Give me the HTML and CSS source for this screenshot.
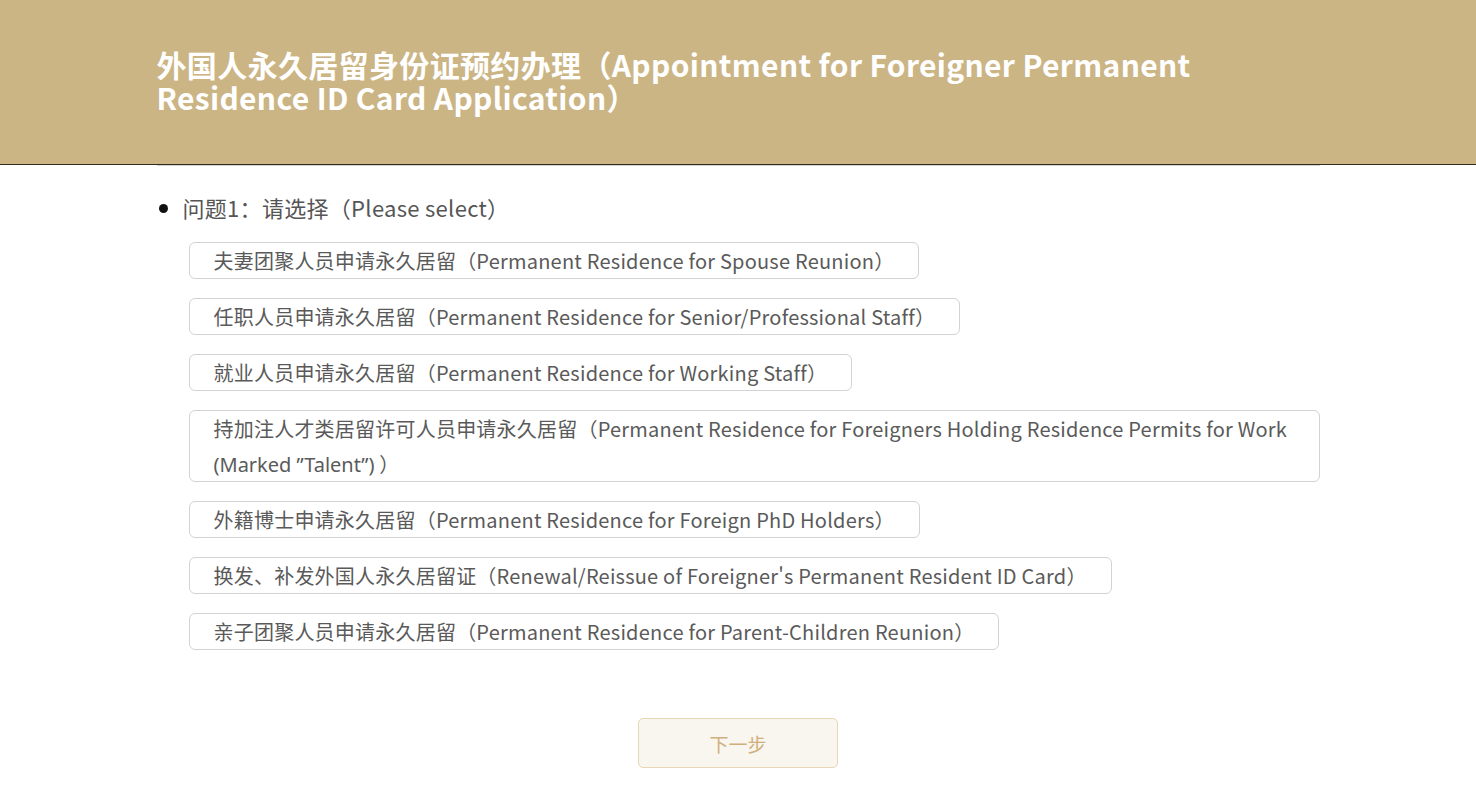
FILE: index.html
```html
<!DOCTYPE html>
<html lang="zh-CN">
<head>
<meta charset="utf-8">
<title>外国人永久居留身份证预约办理</title>
<link rel="stylesheet" href="styles.css">
</head>
<body>
<header class="top">
  <div class="top-inner">
    <h1 class="title">外国人永久居留身份证预约办理（Appointment for Foreigner Permanent Residence ID Card Application）</h1>
  </div>
</header>
<main class="main">
  <ul class="questions">
    <li class="question">
      <div class="q-label">问题1：请选择（Please select）</div>
      <div class="options">
        <div class="option">夫妻团聚人员申请永久居留（Permanent Residence for Spouse Reunion）</div>
        <div class="option">任职人员申请永久居留（Permanent Residence for Senior/Professional Staff）</div>
        <div class="option">就业人员申请永久居留（Permanent Residence for Working Staff）</div>
        <div class="option">持加注人才类居留许可人员申请永久居留（Permanent Residence for Foreigners Holding Residence Permits for Work <span class="latin">(Marked ”Talent”)</span> ）</div>
        <div class="option">外籍博士申请永久居留（Permanent Residence for Foreign PhD Holders）</div>
        <div class="option">换发、补发外国人永久居留证（Renewal/Reissue of Foreigner's Permanent Resident ID Card）</div>
        <div class="option">亲子团聚人员申请永久居留（Permanent Residence for Parent-Children Reunion）</div>
      </div>
    </li>
  </ul>
  <div class="actions">
    <button class="next" type="button">下一步</button>
  </div>
</main>
</body>
</html>
```
FILE: styles.css
```css
html, body {
  margin: 0;
  padding: 0;
  background: #fff;
  font-family: "Noto Sans CJK SC", "Noto Sans", sans-serif;
}
.top {
  background: #cbb585;
  height: 164px;
  border-bottom: 1px solid #2f2a22;
}
.top-inner {
  width: 1163px;
  margin: 0 auto;
  padding-top: 48px;
}
.title {
  margin: 0;
  color: #fff;
  font-size: 30px;
  font-weight: 700;
  line-height: 33px;
  letter-spacing: 0.35px;
  max-width: 1100px;
}
.main {
  width: 1163px;
  margin: 0 auto;
  border-top: 1px solid #d0d0d0;
}
.questions {
  margin: 0;
  padding: 23px 0 0 26px;
}
.question {
  list-style: disc;
  color: #111;
  font-size: 22px;
}
.q-label {
  color: #555;
  font-size: 22px;
  line-height: 36px;
  letter-spacing: 0.3px;
}
.options {
  display: flex;
  flex-direction: column;
  align-items: flex-start;
  gap: 19px;
  margin-top: 17px;
  padding-left: 6px;
}
.option {
  border: 1px solid #d3d3d3;
  border-radius: 6px;
  padding: 0 24px;
  color: #5a5a5a;
  font-size: 20px;
  line-height: 35px;
  letter-spacing: 0.22px;
  box-sizing: border-box;
  max-width: 1131px;
}
.latin {
  font-family: "Noto Sans", sans-serif;
  letter-spacing: 0;
  line-height: 1;
}
.actions {
  display: flex;
  justify-content: center;
  margin-top: 68px;
}
.next {
  width: 200px;
  height: 50px;
  background: #f9f5ef;
  border: 1px solid #e8d6b6;
  border-radius: 5px;
  color: #cfb07c;
  font-family: "Noto Sans CJK SC", sans-serif;
  font-size: 19px;
  cursor: pointer;
}
```
